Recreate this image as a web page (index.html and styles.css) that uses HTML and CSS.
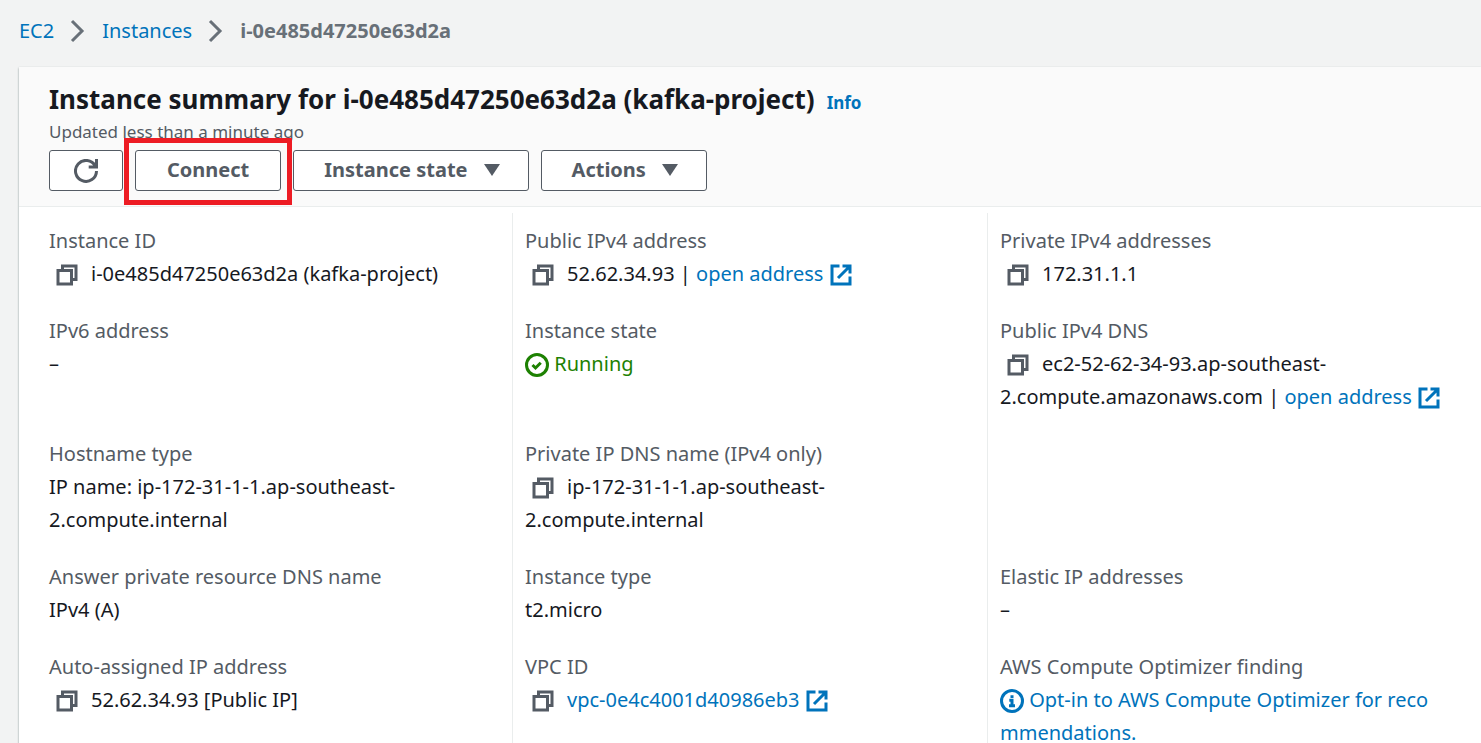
FILE: index.html
```html
<!DOCTYPE html>
<html lang="en">
<head>
<meta charset="utf-8">
<title>Instance details | EC2</title>
<link rel="stylesheet" href="styles.css">
</head>
<body>
<svg class="sprite" aria-hidden="true">
  <symbol id="chevron" viewBox="0 0 16 24"><path d="M2 2l10 10L2 22"/></symbol>
  <symbol id="copy" viewBox="0 0 16 16"><path d="M2 5h9v9H2z"/><path d="M5 5V2h9v9h-3"/></symbol>
  <symbol id="external" viewBox="0 0 16 16"><path d="M9 2h5v5M6 10l8-8M14 9v5H2V2h5"/></symbol>
  <symbol id="check" viewBox="0 0 16 16"><circle cx="8" cy="8" r="7"/><path d="M5 8l2 2 3.5-3.5"/></symbol>
  <symbol id="info" viewBox="0 0 16 16"><circle cx="8" cy="8" r="7"/><path d="M8 11V7.5H6.2M6 11.2h4M8 6V4.2"/></symbol>
  <symbol id="refresh" viewBox="0 0 16 16"><path d="M9.8 5.3H15V0M15 8a7 7 0 1 1-.8-3.3"/></symbol>
  <symbol id="caret" viewBox="0 0 16 12"><path class="solid" d="M0 0h16L8 12z"/></symbol>
</svg>

<nav class="breadcrumbs" aria-label="Breadcrumbs">
  <a href="#ec2">EC2</a>
  <svg class="chevron"><use href="#chevron"/></svg>
  <a href="#instances">Instances</a>
  <svg class="chevron"><use href="#chevron"/></svg>
  <span class="current" aria-current="page">i-0e485d47250e63d2a</span>
</nav>

<main class="card">
  <header class="card-header">
    <div class="heading">
      <h1>Instance summary for i-0e485d47250e63d2a (kafka-project)</h1>
      <a class="info-link" href="#info">Info</a>
    </div>
    <p class="updated">Updated less than a minute ago</p>
    <div class="actions">
      <button class="btn btn-icon" type="button" aria-label="Refresh"><svg class="icon"><use href="#refresh"/></svg></button>
      <span class="highlight"><button class="btn" type="button">Connect</button></span>
      <button class="btn btn-menu" type="button">Instance state <svg class="caret"><use href="#caret"/></svg></button>
      <button class="btn btn-menu" type="button">Actions <svg class="caret"><use href="#caret"/></svg></button>
    </div>
  </header>

  <dl class="details">
    <div class="cell">
      <dt>Instance ID</dt>
      <dd><button class="copy" type="button" aria-label="Copy instance ID"><svg class="icon"><use href="#copy"/></svg></button>i-0e485d47250e63d2a (kafka-project)</dd>
    </div>
    <div class="cell">
      <dt>Public IPv4 address</dt>
      <dd><button class="copy" type="button" aria-label="Copy public address"><svg class="icon"><use href="#copy"/></svg></button>52.62.34.93 | <a href="#open">open address <svg class="icon"><use href="#external"/></svg></a></dd>
    </div>
    <div class="cell">
      <dt>Private IPv4 addresses</dt>
      <dd><button class="copy" type="button" aria-label="Copy private address"><svg class="icon"><use href="#copy"/></svg></button>172.31.1.1</dd>
    </div>

    <div class="cell">
      <dt>IPv6 address</dt>
      <dd>–</dd>
    </div>
    <div class="cell">
      <dt>Instance state</dt>
      <dd class="running"><svg class="icon"><use href="#check"/></svg> Running</dd>
    </div>
    <div class="cell">
      <dt>Public IPv4 DNS</dt>
      <dd><button class="copy" type="button" aria-label="Copy public DNS"><svg class="icon"><use href="#copy"/></svg></button>ec2-52-62-34-93.ap-southeast-<wbr>2.compute.amazonaws.com | <a href="#open-dns">open address <svg class="icon"><use href="#external"/></svg></a></dd>
    </div>

    <div class="cell">
      <dt>Hostname type</dt>
      <dd>IP name: ip-172-31-1-1.ap-southeast-<wbr>2.compute.internal</dd>
    </div>
    <div class="cell">
      <dt>Private IP DNS name (IPv4 only)</dt>
      <dd><button class="copy" type="button" aria-label="Copy private DNS name"><svg class="icon"><use href="#copy"/></svg></button>ip-172-31-1-1.ap-southeast-<wbr>2.compute.internal</dd>
    </div>
    <div class="cell"></div>

    <div class="cell">
      <dt>Answer private resource DNS name</dt>
      <dd>IPv4 (A)</dd>
    </div>
    <div class="cell">
      <dt>Instance type</dt>
      <dd>t2.micro</dd>
    </div>
    <div class="cell">
      <dt>Elastic IP addresses</dt>
      <dd>–</dd>
    </div>

    <div class="cell">
      <dt>Auto-assigned IP address</dt>
      <dd><button class="copy" type="button" aria-label="Copy assigned address"><svg class="icon"><use href="#copy"/></svg></button>52.62.34.93 [Public IP]</dd>
    </div>
    <div class="cell">
      <dt>VPC ID</dt>
      <dd><button class="copy" type="button" aria-label="Copy VPC ID"><svg class="icon"><use href="#copy"/></svg></button><a href="#vpc">vpc-0e4c4001d40986eb3 <svg class="icon"><use href="#external"/></svg></a></dd>
    </div>
    <div class="cell">
      <dt>AWS Compute Optimizer finding</dt>
      <dd><a href="#optimizer"><svg class="icon"><use href="#info"/></svg> Opt-in to AWS Compute Optimizer for reco<wbr>mmendations.</a></dd>
    </div>
  </dl>
</main>
</body>
</html>
```

FILE: styles.css
```css
* {
  box-sizing: border-box;
}

body {
  margin: 0;
  height: 100vh;
  overflow: hidden;
  background: #f2f3f3;
  color: #16191f;
  font-family: "Noto Sans", "Open Sans", sans-serif;
  font-size: 20px;
  line-height: 33px;
}

a {
  color: #0073bb;
  text-decoration: none;
}

.sprite {
  display: none;
}

svg {
  fill: none;
  stroke: currentColor;
  stroke-width: 2;
}

.solid {
  fill: currentColor;
  stroke: none;
}

.icon {
  width: 24px;
  height: 24px;
  vertical-align: -6px;
}

.breadcrumbs {
  display: flex;
  align-items: center;
  gap: 16px;
  padding: 14px 19px 20px;
}

.chevron {
  width: 16px;
  height: 24px;
  color: #687078;
  stroke-width: 3;
}

.current {
  color: #687078;
  font-weight: 700;
}

.card {
  margin-left: 19px;
  background: #fff;
  box-shadow: 0 1px 2px #879596;
}

.card-header {
  padding: 16px 30px 15px;
  background: #fafafa;
  border-bottom: 1px solid #eaeded;
}

.heading {
  display: flex;
  align-items: baseline;
  gap: 12px;
}

h1 {
  margin: 0;
  font-size: 26px;
  font-weight: 700;
  line-height: 33px;
}

.info-link {
  font-size: 17px;
  font-weight: 700;
  line-height: 24px;
}

.updated {
  margin: 0 0 2px;
  color: #545b64;
  font-size: 17px;
  line-height: 32px;
}

.actions {
  display: flex;
  gap: 12px;
}

.btn {
  display: flex;
  align-items: center;
  gap: 16px;
  height: 41px;
  padding: 0 31px 2px;
  border: 1px solid #545b64;
  border-radius: 3px;
  background: #fff;
  color: #545b64;
  font: inherit;
  font-weight: 700;
}

.btn-icon {
  padding: 0 24px;
}

.btn-menu {
  padding: 0 28px 2px 30px;
}

.caret {
  width: 16px;
  height: 12px;
}

.highlight {
  position: relative;
}

.highlight::after {
  content: "";
  position: absolute;
  inset: -12px -11px -14px;
  border: 5px solid #ed1c24;
  pointer-events: none;
}

.details {
  display: grid;
  grid-template-columns: repeat(3, minmax(0, 1fr));
  margin: 0;
  padding: 6px 19px 6px 18px;
}

.cell {
  padding: 11px 12px 13px;
  border-left: 1px solid #eaeded;
}

.cell:nth-child(3n + 1) {
  border-left: 0;
}

dt {
  color: #545b64;
}

dd {
  margin: 0;
}

.running {
  color: #1d8102;
}

.copy {
  margin: 0 12px 0 6px;
  padding: 0;
  border: 0;
  background: none;
  color: #545b64;
  font: inherit;
  line-height: 24px;
}
```
